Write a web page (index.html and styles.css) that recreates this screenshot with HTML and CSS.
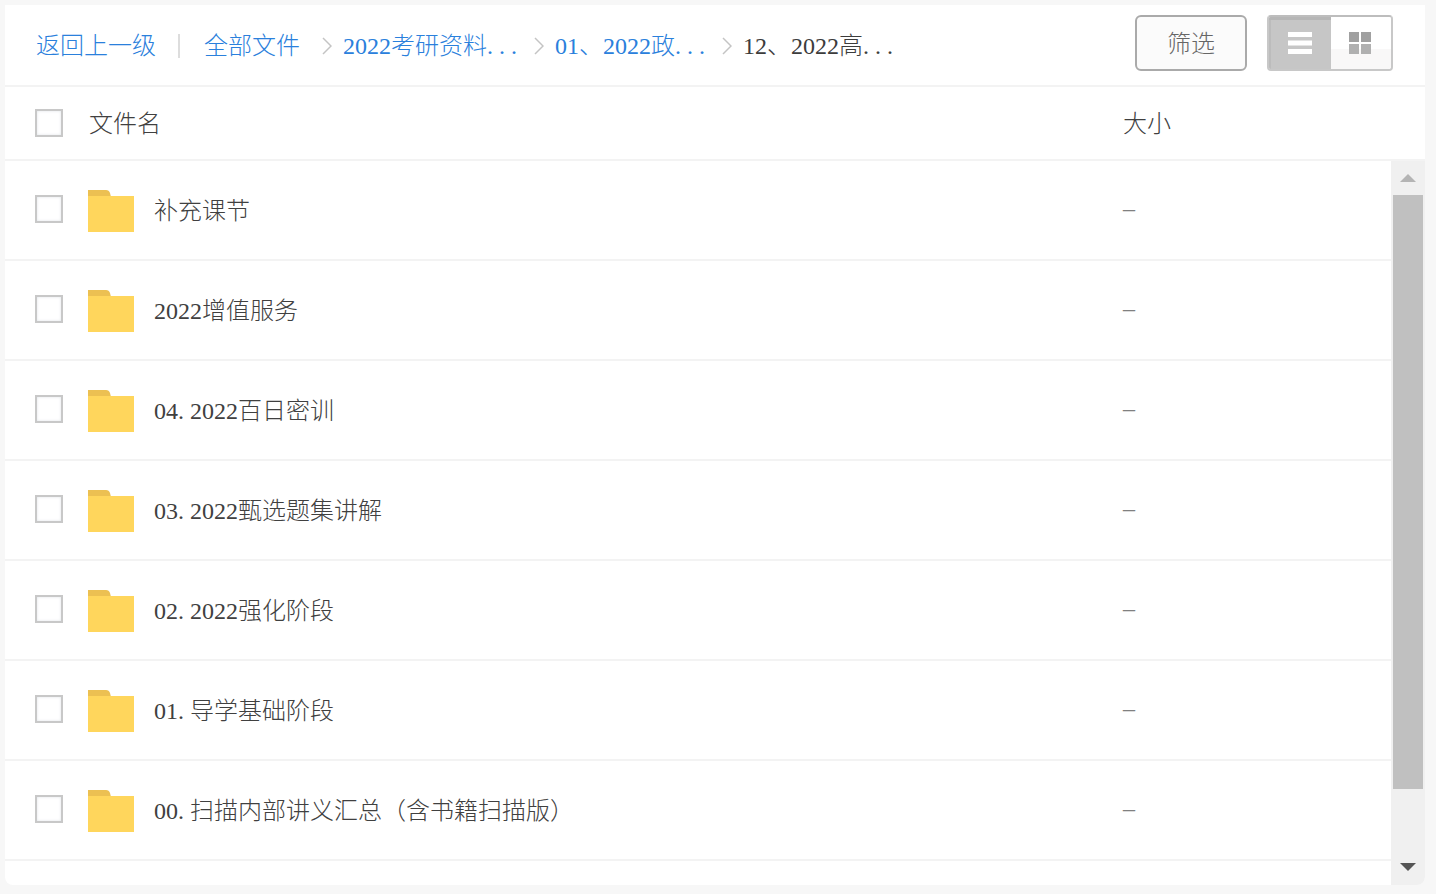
FILE: index.html
```html
<!DOCTYPE html>
<html lang="zh-CN">
<head>
<meta charset="utf-8">
<title>文件列表</title>
<link rel="stylesheet" href="styles.css">
</head>
<body>
<main class="card">
  <header class="topbar">
    <nav class="crumbs">
      <a class="link">返回上一级</a>
      <span class="divider"></span>
      <a class="link all">全部文件</a>
      <svg class="chev" viewBox="0 0 10 18"><path d="M1 1l8 8-8 8"/></svg>
      <a class="link">2022考研资料<span class="dots">...</span></a>
      <svg class="chev" viewBox="0 0 10 18"><path d="M1 1l8 8-8 8"/></svg>
      <a class="link">01、2022政<span class="dots">...</span></a>
      <svg class="chev" viewBox="0 0 10 18"><path d="M1 1l8 8-8 8"/></svg>
      <span class="current">12、2022高<span class="dots">...</span></span>
    </nav>
    <button class="filter">筛选</button>
    <div class="toggle">
      <div class="tog tog-on">
        <svg class="tog-icon" viewBox="0 0 24 22"><path class="bar" d="M0 0h24v5H0zM0 8.500h24v5H0zM0 17h24v5H0z"/></svg>
      </div>
      <div class="tog tog-off">
        <svg class="tog-icon" viewBox="0 0 22 22"><path class="sq-a" d="M0 0h10v10H0zM12 0h10v10H12z"/><path class="sq-b" d="M0 12h10v10H0zM12 12h10v10H12z"/></svg>
      </div>
    </div>
  </header>
  <div class="thead">
    <span class="check"></span>
    <span class="th-name">文件名</span>
    <span class="th-size">大小</span>
  </div>
  <div class="body">
    <ul class="rows">
      <li class="row"><span class="check"></span><svg class="folder" viewBox="0 0 46 42"><path class="tab" d="M0 0h18q3 0 4 3l1 4H0z"/><path class="face" d="M0 6h46v36H0z"/></svg><span class="name">补充课节</span><span class="size">–</span></li>
      <li class="row"><span class="check"></span><svg class="folder" viewBox="0 0 46 42"><path class="tab" d="M0 0h18q3 0 4 3l1 4H0z"/><path class="face" d="M0 6h46v36H0z"/></svg><span class="name">2022增值服务</span><span class="size">–</span></li>
      <li class="row"><span class="check"></span><svg class="folder" viewBox="0 0 46 42"><path class="tab" d="M0 0h18q3 0 4 3l1 4H0z"/><path class="face" d="M0 6h46v36H0z"/></svg><span class="name">04. 2022百日密训</span><span class="size">–</span></li>
      <li class="row"><span class="check"></span><svg class="folder" viewBox="0 0 46 42"><path class="tab" d="M0 0h18q3 0 4 3l1 4H0z"/><path class="face" d="M0 6h46v36H0z"/></svg><span class="name">03. 2022甄选题集讲解</span><span class="size">–</span></li>
      <li class="row"><span class="check"></span><svg class="folder" viewBox="0 0 46 42"><path class="tab" d="M0 0h18q3 0 4 3l1 4H0z"/><path class="face" d="M0 6h46v36H0z"/></svg><span class="name">02. 2022强化阶段</span><span class="size">–</span></li>
      <li class="row"><span class="check"></span><svg class="folder" viewBox="0 0 46 42"><path class="tab" d="M0 0h18q3 0 4 3l1 4H0z"/><path class="face" d="M0 6h46v36H0z"/></svg><span class="name">01. 导学基础阶段</span><span class="size">–</span></li>
      <li class="row"><span class="check"></span><svg class="folder" viewBox="0 0 46 42"><path class="tab" d="M0 0h18q3 0 4 3l1 4H0z"/><path class="face" d="M0 6h46v36H0z"/></svg><span class="name">00. 扫描内部讲义汇总（含书籍扫描版）</span><span class="size">–</span></li>
    </ul>
    <div class="scrollbar">
      <div class="sb-btn"><span class="arrow-up"></span></div>
      <div class="thumb"></div>
      <div class="sb-btn sb-down"><span class="arrow-down"></span></div>
    </div>
  </div>
</main>
</body>
</html>
```
FILE: styles.css
```css
* { box-sizing: border-box; }
html, body { height: 100%; margin: 0; }
body {
  background: #f7f7f7;
  padding: 5px 11px 9px 5px;
  overflow: hidden;
  font-family: "Liberation Serif", "Noto Sans CJK SC", sans-serif;
  font-size: 24px;
  font-weight: 300;
  line-height: 32px;
  color: #404040;
}
.card {
  height: 880px;
  background: #fff;
  border-radius: 0 0 8px 8px;
  display: flex;
  flex-direction: column;
  overflow: hidden;
}
.topbar {
  height: 82px;
  flex: none;
  display: flex;
  align-items: center;
  padding: 0 32px 4px 31px;
  border-bottom: 2px solid #f3f3f3;
}
.crumbs { flex: 1; display: flex; align-items: center; gap: 11px; margin-top: 6px; }
.link { color: #2a80dc; white-space: nowrap; }
.current { color: #3c3c3c; white-space: nowrap; }
.dots { letter-spacing: 6px; }
.divider { width: 2px; height: 24px; background: #ddd; margin: 0 13px 0 11px; }
.all { margin-right: 11px; }
.chev { width: 10px; height: 18px; flex: none; fill: none; stroke: #c4c4c4; stroke-width: 1.500; }
.filter {
  width: 112px;
  height: 56px;
  margin-right: 20px;
  background: #fbfbfb;
  border: 2px solid #aaa;
  border-radius: 6px;
  font: inherit;
  color: #666;
  padding: 2px 0 0;
}
.toggle {
  width: 126px;
  height: 56px;
  display: flex;
  border: 2px solid #c8c8c8;
  border-top-color: #bdbdbd;
  border-radius: 4px;
  overflow: hidden;
  background: #fff;
}
.tog { flex: 1; display: flex; align-items: center; justify-content: center; }
.tog-on {
  flex: none;
  width: 62px;
  background: #c6c6c6;
  box-shadow: inset 0 3px 0 #b6b6b6, inset 2px 0 0 #bcbcbc;
}
.tog-off { background: linear-gradient(#fff 62%, #f9f8f8 62%); }
.tog-off .tog-icon { margin-left: -2px; }
.tog-icon { width: 24px; height: 22px; display: block; }
.bar { fill: #fff; }
.sq-a { fill: #a0a0a0; }
.sq-b { fill: #b0b0b0; }
.thead {
  height: 74px;
  flex: none;
  display: flex;
  align-items: center;
  padding-left: 30px;
  border-bottom: 2px solid #f3f3f3;
}
.check {
  width: 28px;
  height: 28px;
  flex: none;
  background: #fff;
  border: 2px solid #c8c8c8;
  box-shadow: inset 0 0 3px #dfe3e8;
}
.th-name { margin-left: 26px; width: 1034px; padding-top: 2px; }
.th-size { flex: none; padding-top: 2px; }
.body { flex: 1; display: flex; min-height: 0; }
.rows { flex: 1; list-style: none; margin: 0; padding: 0; }
.row {
  height: 100px;
  display: flex;
  align-items: center;
  padding-left: 30px;
  border-bottom: 2px solid #f3f3f3;
}
.row .check { margin-bottom: 2px; }
.folder { width: 46px; height: 42px; flex: none; margin: 2px 0 0 25px; }
.tab { fill: #ecc052; }
.face { fill: #ffd65c; }
.name { margin-left: 20px; width: 969px; white-space: nowrap; padding-top: 2px; }
.size { color: #808080; flex: none; margin-bottom: 4px; }
.scrollbar {
  width: 34px;
  flex: none;
  background: #f0f0f0;
  display: flex;
  flex-direction: column;
  align-items: center;
}
.sb-btn { height: 34px; flex: none; display: flex; align-items: center; justify-content: center; width: 100%; }
.sb-down { margin-top: auto; height: 36px; }
.thumb { width: 30px; height: 594px; background: #c0c0c0; flex: none; }
.arrow-up { width: 0; height: 0; border-left: 8px solid transparent; border-right: 8px solid transparent; border-bottom: 8px solid #b4b4b4; }
.arrow-down { width: 0; height: 0; border-left: 8px solid transparent; border-right: 8px solid transparent; border-top: 8px solid #555; }
```
